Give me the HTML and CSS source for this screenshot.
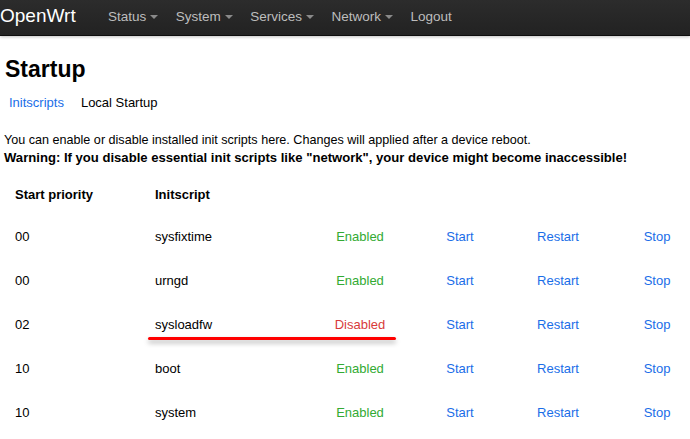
FILE: index.html
```html
<!DOCTYPE html>
<html>
<head>
<meta charset="utf-8">
<link rel="stylesheet" href="styles.css">
</head>
<body>
<header class="navbar">
  <div class="brand">OpenWrt</div>
  <nav class="menu">
    <span class="item">Status <span class="caret"></span></span>
    <span class="item">System <span class="caret"></span></span>
    <span class="item">Services <span class="caret"></span></span>
    <span class="item">Network <span class="caret"></span></span>
    <span class="item">Logout</span>
  </nav>
</header>
<main class="page">
  <h1 class="title">Startup</h1>
  <div class="tabs">
    <span class="tab link">Initscripts</span>
    <span class="tab">Local Startup</span>
  </div>
  <p class="desc">You can enable or disable installed init scripts here. Changes will applied after a device reboot.<br><strong>Warning: If you disable essential init scripts like "network", your device might become inaccessible!</strong></p>
  <div class="table">
    <div class="row head">
      <div class="c1">Start priority</div>
      <div class="c2">Initscript</div>
      <div class="c3"></div><div class="c4"></div><div class="c5"></div><div class="c6"></div>
    </div>
    <div class="row">
      <div class="c1">00</div><div class="c2">sysfixtime</div>
      <div class="c3 on">Enabled</div><div class="c4 link">Start</div><div class="c5 link">Restart</div><div class="c6 link">Stop</div>
    </div>
    <div class="row">
      <div class="c1">00</div><div class="c2">urngd</div>
      <div class="c3 on">Enabled</div><div class="c4 link">Start</div><div class="c5 link">Restart</div><div class="c6 link">Stop</div>
    </div>
    <div class="row marked">
      <div class="c1">02</div><div class="c2">sysloadfw</div>
      <div class="c3 off">Disabled</div><div class="c4 link">Start</div><div class="c5 link">Restart</div><div class="c6 link">Stop</div>
      <div class="redline"></div>
    </div>
    <div class="row">
      <div class="c1">10</div><div class="c2">boot</div>
      <div class="c3 on">Enabled</div><div class="c4 link">Start</div><div class="c5 link">Restart</div><div class="c6 link">Stop</div>
    </div>
    <div class="row">
      <div class="c1">10</div><div class="c2">system</div>
      <div class="c3 on">Enabled</div><div class="c4 link">Start</div><div class="c5 link">Restart</div><div class="c6 link">Stop</div>
    </div>
  </div>
</main>
</body>
</html>
```
FILE: styles.css
```css
html, body {
  margin: 0;
  padding: 0;
  background: #fff;
  overflow: hidden;
}
body {
  font-family: "Liberation Sans", Arial, sans-serif;
  font-size: 13px;
  color: #000;
  width: 690px;
  height: 439px;
}
.navbar {
  height: 35px;
  background: linear-gradient(#2c2c2c, #222);
  border-bottom: 1px solid #0d0d0d;
  box-shadow: 0 1px 3px rgba(0,0,0,0.25);
  display: flex;
  align-items: center;
}
.brand {
  color: #fff;
  font-size: 19px;
  padding-left: 0;
  width: 108px;
  margin-top: -3px;
}
.menu {
  display: flex;
  margin-top: -3px;
}
.item {
  color: #bdbdbd;
  font-size: 13.5px;
  margin-right: 17.5px;
  display: inline-flex;
  align-items: center;
}
.caret {
  display: inline-block;
  width: 0;
  height: 0;
  border-left: 4px solid transparent;
  border-right: 4px solid transparent;
  border-top: 4px solid #8a8a8a;
  margin-left: 4px;
  margin-top: 2px;
}
.page {
  padding: 0 0 0 5px;
}
.title {
  font-size: 23px;
  font-weight: bold;
  margin: 0;
  padding-top: 20px;
  line-height: 26px;
}
.tabs {
  display: flex;
  margin-top: 13px;
  padding-left: 4px;
  line-height: 16px;
}
.tab {
  margin-right: 17px;
}
.link {
  color: #1a6ee8;
}
.desc {
  margin: 21px 0 0 -1px;
  line-height: 17px;
  font-size: 12.6px;
}
.desc strong {
  font-weight: bold;
  font-size: 13.1px;
}
.table {
  margin-left: -5px;
  margin-top: 20px;
}
.row {
  display: grid;
  grid-template-columns: 155px 145px 120px 80px 116px 74px;
  height: 44px;
  align-items: center;
  position: relative;
}
.row.head {
  height: 27px;
  font-weight: bold;
  align-items: start;
}
.c1 { padding-left: 15px; }
.c3, .c4, .c5, .c6 { text-align: center; }
.c6 { padding-left: 8px; }
.on { color: #33aa33; }
.off { color: #d83a3a; }
.redline {
  position: absolute;
  left: 148px;
  top: 35px;
  width: 248px;
  height: 3px;
  border-radius: 2px;
  background: #ff0000;
  box-shadow: 0 3px 5px rgba(0,0,0,0.3);
}
```
